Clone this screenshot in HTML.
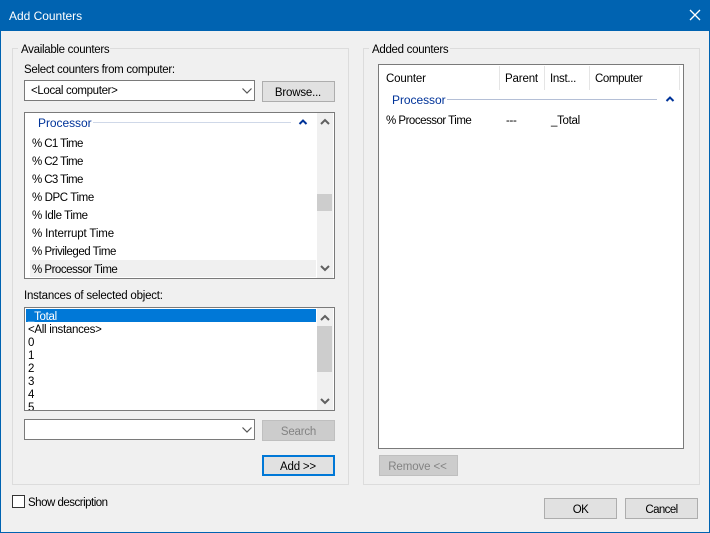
<!DOCTYPE html>
<html><head><meta charset="utf-8"><style>
html,body{margin:0;padding:0;background:#f0f0f0}
#w{position:relative;width:710px;height:533px;overflow:hidden;background:#f0f0f0;font:11.5px "Liberation Sans",sans-serif;color:#000}
#w div,#w svg{position:absolute;box-sizing:border-box}
.t{white-space:nowrap;line-height:14px;height:14px;letter-spacing:-.3px;margin-top:1px}
.g{border:1px solid #dcdcdc}
.i{background:#fff;border:1px solid #7a7a7a}
.b{background:#e1e1e1;border:1px solid #adadad;text-align:center;line-height:21px;padding-top:1px;white-space:nowrap;letter-spacing:-.2px;overflow:hidden}
.d{background:#ccc;border:1px solid #bfbfbf;color:#838383}
.lb{background:#f0f0f0;height:14px}
.h{color:#003399;font-size:12px;letter-spacing:-.05px;margin-top:0}
</style></head><body><div id="w">
<div style="left:0;top:0;width:710px;height:533px;border:1px solid #0063b1;border-width:0 1px 1px 1px"></div>
<div style="left:0;top:0;width:710px;height:31px;background:#0063b1"></div>
<div class="t" style="left:9px;top:9px;color:#fff;font-size:12px;letter-spacing:-.02px;margin-top:0">Add Counters</div>
<svg style="left:689px;top:9px" width="12" height="12"><path d="M1 1L11 11M11 1L1 11" stroke="#fff" stroke-width="1.3" fill="none"/></svg>

<div class="g" style="left:12px;top:48px;width:337px;height:437px"></div>
<div class="lb" style="left:18px;top:42px;width:92px"></div>
<div class="t" style="left:21px;top:42px">Available counters</div>
<div class="t" style="left:24px;top:62px">Select counters from computer:</div>
<div class="i" style="left:24px;top:80px;width:231px;height:21px"></div>
<div class="t" style="left:31px;top:83px;letter-spacing:-.35px">&lt;Local computer&gt;</div>
<svg style="left:241px;top:87px" width="12" height="8"><path d="M1.5 1.5L6 6L10.5 1.5" stroke="#555" stroke-width="1.2" fill="none"/></svg>
<div class="b" style="left:262px;top:81px;width:73px;height:21px;padding-right:1px">Browse...</div>

<div class="i" style="left:24px;top:112px;width:311px;height:167px"></div>
<div style="left:317px;top:113px;width:16px;height:165px;background:#f0f0f0"></div>
<div style="left:317px;top:194px;width:15px;height:17px;background:#cdcdcd"></div>
<svg style="left:320px;top:118px" width="10" height="8"><path d="M1 6L5 2L9 6" stroke="#606060" stroke-width="2" fill="none"/></svg>
<svg style="left:320px;top:264px" width="10" height="8"><path d="M1 2L5 6L9 2" stroke="#606060" stroke-width="2" fill="none"/></svg>
<div class="t h" style="left:38px;top:116px">Processor</div>
<div style="left:93px;top:122px;width:198px;height:1px;background:#cfd8e8"></div>
<svg style="left:298px;top:118px" width="10" height="8"><path d="M1.5 6L5 2.5L8.500 6" stroke="#003399" stroke-width="2" fill="none"/></svg>
<div class="t" style="left:32px;top:136px;letter-spacing:-.6px">% C1 Time</div>
<div class="t" style="left:32px;top:154px;letter-spacing:-.6px">% C2 Time</div>
<div class="t" style="left:32px;top:172px;letter-spacing:-.6px">% C3 Time</div>
<div class="t" style="left:32px;top:190px;letter-spacing:-.4px">% DPC Time</div>
<div class="t" style="left:32px;top:208px;letter-spacing:-.4px">% Idle Time</div>
<div class="t" style="left:32px;top:226px;letter-spacing:-.15px">% Interrupt Time</div>
<div class="t" style="left:32px;top:244px;letter-spacing:-.48px">% Privileged Time</div>
<div style="left:30px;top:260px;width:286px;height:17px;background:#f0f0f0"></div>
<div class="t" style="left:32px;top:262px;letter-spacing:-.5px">% Processor Time</div>

<div class="t" style="left:24px;top:288px;letter-spacing:-.22px">Instances of selected object:</div>
<div class="i" style="left:24px;top:307px;width:311px;height:104px;overflow:hidden"></div>
<div style="left:26px;top:309px;width:290px;height:13px;background:#0078d7"></div>
<div style="left:317px;top:308px;width:16px;height:102px;background:#f0f0f0"></div>
<div style="left:317px;top:326px;width:15px;height:46px;background:#cdcdcd"></div>
<svg style="left:320px;top:314px" width="10" height="8"><path d="M1 6L5 2L9 6" stroke="#606060" stroke-width="2" fill="none"/></svg>
<svg style="left:320px;top:397px" width="10" height="8"><path d="M1 2L5 6L9 2" stroke="#606060" stroke-width="2" fill="none"/></svg>
<div class="t" style="left:28px;top:309px;color:#fff">_Total</div>
<div class="t" style="left:28px;top:322px">&lt;All instances&gt;</div>
<div class="t" style="left:28px;top:335px">0</div>
<div class="t" style="left:28px;top:348px">1</div>
<div class="t" style="left:28px;top:361px">2</div>
<div class="t" style="left:28px;top:374px">3</div>
<div class="t" style="left:28px;top:387px">4</div>
<div style="left:28px;top:400px;width:20px;height:10px;overflow:hidden"><div class="t" style="left:0;top:0">5</div></div>

<div class="i" style="left:24px;top:419px;width:231px;height:21px"></div>
<svg style="left:241px;top:426px" width="12" height="8"><path d="M1.5 1.5L6 6L10.500 1.500" stroke="#555" stroke-width="1.2" fill="none"/></svg>
<div class="b d" style="left:262px;top:420px;width:73px;height:21px">Search</div>
<div class="b" style="left:262px;top:455px;width:73px;height:21px;border:2px solid #0078d7;line-height:19px;padding-right:1px">Add &gt;&gt;</div>

<div style="left:12px;top:495px;width:13px;height:13px;background:#fff;border:1px solid #333"></div>
<div class="t" style="left:28px;top:495px;letter-spacing:-.5px">Show description</div>

<div class="g" style="left:363px;top:48px;width:337px;height:437px"></div>
<div class="lb" style="left:369px;top:42px;width:81px"></div>
<div class="t" style="left:372px;top:42px">Added counters</div>
<div class="i" style="left:378px;top:64px;width:306px;height:385px"></div>
<div style="left:499px;top:66px;width:1px;height:24px;background:#e5e5e5"></div>
<div style="left:544px;top:66px;width:1px;height:24px;background:#e5e5e5"></div>
<div style="left:589px;top:66px;width:1px;height:24px;background:#e5e5e5"></div>
<div style="left:679px;top:66px;width:1px;height:24px;background:#e5e5e5"></div>
<div class="t" style="left:386px;top:71px;letter-spacing:-.15px">Counter</div>
<div class="t" style="left:505px;top:71px;letter-spacing:-.15px">Parent</div>
<div class="t" style="left:550px;top:71px">Inst...</div>
<div class="t" style="left:595px;top:71px;letter-spacing:-.4px">Computer</div>
<div class="t h" style="left:392px;top:93px">Processor</div>
<div style="left:447px;top:99px;width:210px;height:1px;background:#b4bfd6"></div>
<svg style="left:665px;top:95px" width="10" height="8"><path d="M1.500 6L5 2.500L8.500 6" stroke="#003399" stroke-width="2" fill="none"/></svg>
<div class="t" style="left:386px;top:113px;letter-spacing:-.5px">% Processor Time</div>
<div class="t" style="left:506px;top:113px">---</div>
<div class="t" style="left:551px;top:113px">_Total</div>
<div class="b d" style="left:379px;top:455px;width:79px;height:21px;letter-spacing:-.1px;padding-right:2px">Remove &lt;&lt;</div>
<div class="b" style="left:544px;top:498px;width:73px;height:21px;letter-spacing:-.5px">OK</div>
<div class="b" style="left:625px;top:498px;width:73px;height:21px;letter-spacing:-.6px">Cancel</div>
</div></body></html>
